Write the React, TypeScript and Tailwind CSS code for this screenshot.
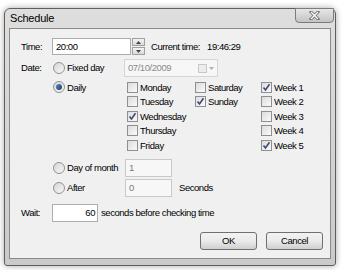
import React from "react";

const font = { fontFamily: '"Liberation Sans", Arial, sans-serif' };

function Check({ checked }: { checked?: boolean }) {
  return (
    <span className="relative inline-block w-[11px] h-[11px] border border-[#8e8f8f] bg-gradient-to-br from-[#dcdcdc] to-[#fafafa] shrink-0">
      {checked && (
        <svg className="absolute left-0 top-0" width="9" height="9" viewBox="0 0 9 9">
          <path d="M1.5 4.5 L3.5 7 L7.5 1.2" fill="none" stroke="#3c4a78" strokeWidth="1.6" />
        </svg>
      )}
    </span>
  );
}

function Radio({ checked }: { checked?: boolean }) {
  return (
    <span className="relative inline-flex items-center justify-center w-[12px] h-[12px] rounded-full border border-[#929292] bg-gradient-to-br from-[#d5d5d5] to-[#f8f8f8] shrink-0">
      {checked && <span className="block w-[6px] h-[6px] rounded-full bg-gradient-to-br from-[#5a8fc6] to-[#1d3a63]" />}
    </span>
  );
}

function CheckItem({ label, checked }: { label: string; checked?: boolean }) {
  return (
    <div className="flex items-center gap-[2px] h-[14.5px]">
      <Check checked={checked} />
      <span>{label}</span>
    </div>
  );
}

function Btn({ label }: { label: string }) {
  return (
    <div className="w-[57px] h-[18px] rounded-[3px] border border-[#707070] bg-gradient-to-b from-[#f2f2f2] via-[#ebebeb] to-[#cfcfcf] flex items-center justify-center">
      {label}
    </div>
  );
}

export default function App() {
  return (
    <div className="w-[342px] h-[270px] bg-white text-black text-[9.5px] tracking-[-0.45px] leading-none whitespace-nowrap" style={font}>
      <div className="pt-[8px] pl-[4px]">
        <div className="relative w-[332px] h-[258px] rounded-t-[6px] rounded-b-[3px] border border-[#5e5e5e] bg-gradient-to-b from-[#dedede] to-[#cacaca] shadow-[0_0_6px_rgba(0,0,0,0.35)] flex flex-col">
          {/* title bar */}
          <div className="h-[19px] flex items-center pl-[5px] text-[11px] tracking-[-0.2px]">Schedule</div>
          <div className="absolute top-[-1px] right-[1px] w-[39px] h-[15px] rounded-b-[4px] border border-[#7c7c7c] bg-gradient-to-b from-[#e6e6e6] to-[#c4c4c4] flex items-center justify-center">
            <svg width="11" height="9" viewBox="0 0 11 9">
              <path d="M2 1 L9 8 M9 1 L2 8" stroke="#6a6a6a" strokeWidth="3" strokeLinecap="square" />
              <path d="M2 1 L9 8 M9 1 L2 8" stroke="#ffffff" strokeWidth="1.4" />
            </svg>
          </div>
          {/* client */}
          <div className="mx-[4px] mb-[6px] flex-1 border border-[#8a8a8a] bg-[#f0f0f0] pl-[11px] pr-[7px] pt-[9px] flex flex-col">
            {/* time row */}
            <div className="flex items-center h-[17px]">
              <span className="w-[31px]">Time:</span>
              <div className="w-[79px] h-[17px] border border-[#abadb3] bg-white flex items-center pl-[3px]">20:00</div>
              <div className="ml-[1px] flex flex-col w-[13px] h-[17px]">
                <div className="h-[8px] border border-[#a0a0a0] bg-gradient-to-b from-[#f4f4f4] to-[#dadada] flex items-center justify-center">
                  <svg width="5" height="3" viewBox="0 0 5 3"><path d="M0 3 L2.5 0 L5 3Z" fill="#444" /></svg>
                </div>
                <div className="h-[8px] mt-[1px] border border-[#a0a0a0] bg-gradient-to-b from-[#f4f4f4] to-[#dadada] flex items-center justify-center">
                  <svg width="5" height="3" viewBox="0 0 5 3"><path d="M0 0 L2.5 3 L5 0Z" fill="#444" /></svg>
                </div>
              </div>
              <span className="ml-[6px]">Current time:</span>
              <span className="ml-[7px]">19:46:29</span>
            </div>
            {/* date row */}
            <div className="flex items-center h-[18px] mt-[4px]">
              <span className="w-[32px]">Date:</span>
              <div className="w-[71px] flex items-center gap-[2px]">
                <Radio />
                <span>Fixed day</span>
              </div>
              <div className="w-[94px] h-[18px] border border-[#d5d5d5] bg-[#f7f7f7] flex items-center pl-[3px] text-[#8a8a8a]">
                <span className="flex-1">07/10/2009</span>
                <span className="w-[9px] h-[9px] border border-[#c8c8c8] bg-[#ececec]" />
                <svg className="ml-[2px] mr-[3px]" width="5" height="3" viewBox="0 0 5 3"><path d="M0 0 L2.5 3 L5 0Z" fill="#b0b0b0" /></svg>
              </div>
            </div>
            {/* daily block */}
            <div className="flex mt-[3px]">
              <div className="w-[32px]" />
              <div className="w-[74px] flex items-start">
                <div className="flex items-center gap-[2px] h-[14.5px]">
                  <Radio checked />
                  <span>Daily</span>
                </div>
              </div>
              <div className="w-[68px] flex flex-col">
                <CheckItem label="Monday" />
                <CheckItem label="Tuesday" />
                <CheckItem label="Wednesday" checked />
                <CheckItem label="Thursday" />
                <CheckItem label="Friday" />
              </div>
              <div className="w-[66px] flex flex-col">
                <CheckItem label="Saturday" />
                <CheckItem label="Sunday" checked />
              </div>
              <div className="flex flex-col">
                <CheckItem label="Week 1" checked />
                <CheckItem label="Week 2" />
                <CheckItem label="Week 3" />
                <CheckItem label="Week 4" />
                <CheckItem label="Week 5" checked />
              </div>
            </div>
            {/* day of month */}
            <div className="flex items-center h-[18px] mt-[6px]">
              <div className="w-[32px]" />
              <div className="w-[72px] flex items-center gap-[2px]">
                <Radio />
                <span>Day of month</span>
              </div>
              <div className="w-[47px] h-[18px] border border-[#c9c9c9] bg-[#f7f7f7] flex items-center pl-[3px] text-[#7a7a7a]">1</div>
            </div>
            {/* after */}
            <div className="flex items-center h-[18px] mt-[2px]">
              <div className="w-[32px]" />
              <div className="w-[72px] flex items-center gap-[2px]">
                <Radio />
                <span>After</span>
              </div>
              <div className="w-[47px] h-[18px] border border-[#c9c9c9] bg-[#f7f7f7] flex items-center pl-[3px] text-[#7a7a7a]">0</div>
              <span className="ml-[7px]">Seconds</span>
            </div>
            {/* wait */}
            <div className="flex items-center h-[18px] mt-[7px]">
              <span className="w-[31px]">Wait:</span>
              <div className="w-[46px] h-[18px] border border-[#abadb3] bg-white flex items-center justify-end pr-[2px]">60</div>
              <span className="ml-[3px]">seconds before checking time</span>
            </div>
            {/* buttons */}
            <div className="flex justify-end gap-[9px] mt-[10px]">
              <Btn label="OK" />
              <Btn label="Cancel" />
            </div>
          </div>
        </div>
      </div>
    </div>
  );
}
